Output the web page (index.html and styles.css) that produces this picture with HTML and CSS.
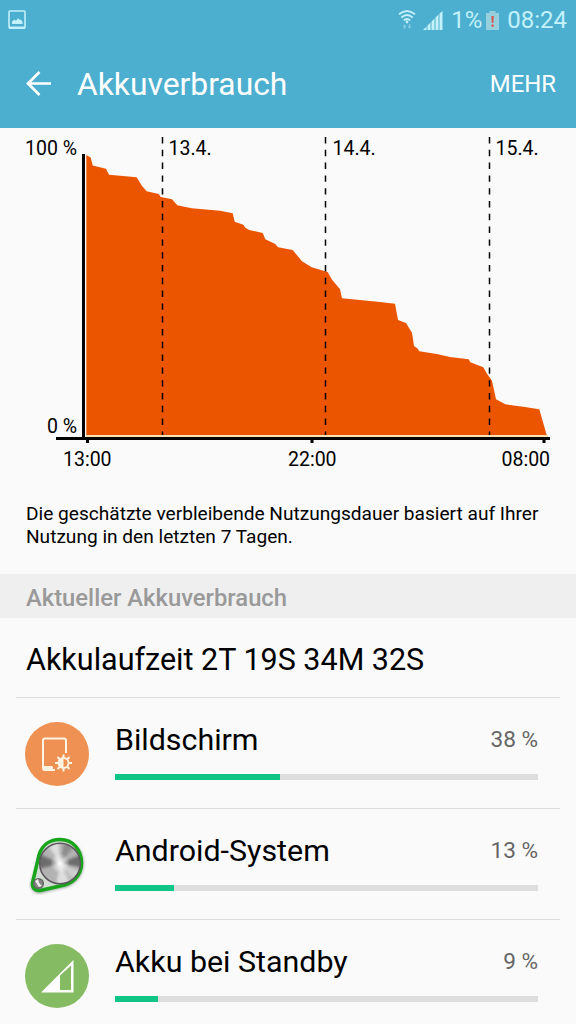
FILE: index.html
```html
<!DOCTYPE html>
<html lang="de">
<head>
  <meta charset="UTF-8" />
  <meta name="viewport" content="width=device-width, initial-scale=1.0" />
  <title>Akkuverbrauch</title>
  <link rel="stylesheet" href="styles.css">
</head>
<body>
  <!-- Statusleiste -->
  <div class="statusbar">
    <svg class="icon-picture" width="18" height="20" viewBox="0 0 18 20">
      <rect x="1" y="1" width="16" height="17" rx="1" fill="none" stroke="#c3f1fc" stroke-width="1.6" />
      <path d="M1 16.500h16V19H1z" fill="#c3f1fc" />
      <path d="M4 14v-2.5l2.5-2 1.5 1.3 2.2-2.8 1.5 2 1-.6 1.8 2.4V14z" fill="#c3f1fc" />
    </svg>
    <div class="status-right">
      <svg class="icon-wifi" width="18" height="20" viewBox="0 0 18 20">
        <g fill="none" stroke="#c3f1fc" stroke-width="1.9">
          <path d="M1 4.300Q9-2.300 17 4.300" />
          <path d="M3.400 7.500Q9 2.700 14.600 7.500" />
          <path d="M5.800 10.400Q9 7.600 12.200 10.400" />
        </g>
        <circle cx="9" cy="12" r="1.4" fill="#c3f1fc" />
        <path d="M6.500 14.200l2 2.300H7.300v2.300H5.700v-2.300H4.500z" fill="#85cbe1" />
        <path d="M11.500 18.800l-2-2.300h1.200v-2.300h1.600v2.300h1.200z" fill="#85cbe1" />
      </svg>
      <svg class="icon-signal" width="20" height="19" viewBox="0 0 20 19">
        <path d="M0 19l3.500-3.500V19zM4.500 14.500l3-3V19h-3zM8.500 10.500l3-3V19h-3zM12.500 6.500l3-3V19h-3zM16.500 2.500L19.500 0v19h-3z" fill="#c3f1fc" />
      </svg>
      <span class="percent">1%</span>
      <svg class="icon-battery" width="13" height="19" viewBox="0 0 13 19">
        <path d="M3.500 0h6v2H13v17H0V2h3.500z" fill="#96d0df" />
        <path d="M5.400 5h2.400l-.4 7H5.800zM5.500 13.500h2.200v2.300H5.500z" fill="#d9534a" />
      </svg>
      <span class="clock">08:24</span>
    </div>
  </div>

  <!-- Titelleiste -->
  <div class="appbar">
    <svg class="back" width="28" height="28" viewBox="0 0 28 28">
      <path d="M26 13.500H3M14.500 2L3 13.500l11.500 11.500" fill="none" stroke="#fff" stroke-width="2.700" />
    </svg>
    <h1>Akkuverbrauch</h1>
    <span class="more">MEHR</span>
  </div>

  <!-- Verlauf -->
  <svg class="chart" width="576" height="352" viewBox="0 128 576 352">
    <path class="base" d="M86 435h462v2H86z" />
    <path class="area" d="M86.300 435V155l4.400 2.500 2 8 13.300 3.200 3 6 27.700 2.600L142 186l4.700 5.300 12 2.700 2 3 11.300 2.300 5.300 6 14.400 3L220 210.700l12.700 2.600 2 8.400 8.600 3 2 3 4 2.300 13.400 3 2.600 6.300 10 4.700 2.700 3.300 14.700 2.700 9.300 11.300 9.700 6L327.700 272l4 7.300 8.300 10 2 9 38 3.700 15 1.700 3 16.300 8 3 6 9.700 2 13.300 3.300 2.300 2 3L436.700 354l13.300 3 18.700 2.300 1.600 3 13 5 3.400 6 5.300 7.400 4 18.600 9.300 5 18 2.400 16 2.600L546.700 435z" />
    <g class="days">
      <path d="M162.500 137v298" />
      <path d="M325.500 137v298" />
      <path d="M489.500 137v298" />
    </g>
    <path class="axis" d="M82 154h3v283h465v3H56v-3h26zM86 440h3v3h-3zM310.500 440h3v3h-3zM542.500 440h3v3h-3z" />
    <g class="labels">
      <text x="25" y="154.500">100 %</text>
      <text x="47" y="432.500">0 %</text>
      <text x="168.500" y="154.500">13.4.</text>
      <text x="332.500" y="154.500">14.4.</text>
      <text x="495.500" y="154.500">15.4.</text>
      <text x="63" y="466">13:00</text>
      <text x="288" y="466">22:00</text>
      <text x="501.500" y="466">08:00</text>
    </g>
  </svg>

  <p class="note">Die geschätzte verbleibende Nutzungsdauer basiert auf Ihrer<br>Nutzung in den letzten 7 Tagen.</p>

  <h2 class="section">Aktueller Akkuverbrauch</h2>
  <div class="runtime">Akkulaufzeit 2T 19S 34M 32S</div>

  <!-- Verbraucher -->
  <div class="row">
    <svg class="row-icon" width="64" height="64" viewBox="0 0 64 64">
      <circle cx="32" cy="32" r="32" fill="#ee9152" />
      <path d="M41 31V18.500q0-2-2-2H20q-2 0-2 2V46q0 2 2 2h10" fill="none" stroke="#fff4e4" stroke-width="2" />
      <path d="M18 44h9.500l1 5H20q-2 0-2-2z" fill="#fff4e4" />
      <g transform="translate(38.500 41)">
        <path d="M0-8.500V8.500M-8.500 0H8.500M-6-6L6 6M-6 6L6-6" stroke="#fff4e4" stroke-width="2" />
        <circle r="5" fill="#ee9152" stroke="#fff4e4" stroke-width="1.800" />
        <path d="M0-4.500A4.500 4.500 0 0 0 0 4.500z" fill="#fff4e4" />
      </g>
    </svg>
    <div class="row-body">
      <div class="row-text"><span class="name">Bildschirm</span><span class="value">38 %</span></div>
      <div class="bar"><div class="fill" style="width: 39.1%"></div></div>
    </div>
  </div>

  <div class="row">
    <svg class="row-icon" width="64" height="64" viewBox="0 0 64 64">
      <defs>
        <radialGradient id="shine">
          <stop offset="0" stop-color="#fff" />
          <stop offset="1" stop-color="#fff" stop-opacity="0" />
        </radialGradient>
        <clipPath id="knob"><circle cx="35" cy="30.500" r="20" /></clipPath>
        <filter id="soft" x="-20%" y="-20%" width="140%" height="140%"><feGaussianBlur stdDeviation="1.500" /></filter>
      </defs>
      <path d="M14 23C17 12 26 7 35 7C49 7 58.500 17 58.500 30C58.500 44 48 54 36 55L16 60C10 61 5 57 6 50Z" fill="#8b968b" filter="url(#soft)" />
      <path d="M14 22C17 12 25 6.500 35 6.500C48 6.500 56.500 17 56.500 30C56.500 43 47 51.500 35 53L15 57.500C10 58 7 55 7.500 50Z" fill="#d3dcd3" stroke="#18a51b" stroke-width="3.500" stroke-linejoin="round" />
      <g clip-path="url(#knob)">
        <path d="M14 9h42v43H14z" fill="#b2b2b2" />
        <g filter="url(#soft)">
          <path d="M35 30.500L10 19v18zM35 30.500L60 20v15z" fill="#6c6c6c" />
          <path d="M35 30.500L18 5l16-2zM35 30.500L50 58H30z" fill="#dedede" />
          <path d="M35 30.500L60 40l-8 12z" fill="#cfcfcf" />
          <path d="M35 30.500L40 5l11 6z" fill="#8d8d8d" />
        </g>
        <circle cx="35" cy="30.500" r="10" fill="url(#shine)" />
      </g>
      <circle cx="35" cy="30.500" r="20.300" fill="none" stroke="#5d555d" stroke-width="1.500" />
      <circle cx="13.500" cy="50.500" r="4.800" fill="#858585" stroke="#666" stroke-width="1.500" />
      <path d="M10 48l3-2 1 4 3 3-3 1z" fill="#eee" />
    </svg>
    <div class="row-body">
      <div class="row-text"><span class="name">Android-System</span><span class="value">13 %</span></div>
      <div class="bar"><div class="fill" style="width: 14%"></div></div>
    </div>
  </div>

  <div class="row">
    <svg class="row-icon" width="64" height="64" viewBox="0 0 64 64">
      <circle cx="32" cy="32" r="32" fill="#85bb62" />
      <path d="M16 48.500L48.500 16v32.500zM35 31.500V46h11V21.500z" fill="#fff" fill-rule="evenodd" />
    </svg>
    <div class="row-body">
      <div class="row-text"><span class="name">Akku bei Standby</span><span class="value">9 %</span></div>
      <div class="bar"><div class="fill" style="width: 10.1%"></div></div>
    </div>
  </div>
</body>
</html>
```
FILE: styles.css
```css
:root {
  --bar-blue: #4cafcf;
  --status-text: #c3f1fc;
  --page: #fafafa;
  --green: #10c486;
}
* { box-sizing: border-box; }
body {
  font-family: Roboto, "Liberation Sans", sans-serif;
  background: var(--page); color: #000;
  margin: 0; height: 1024px; overflow: hidden;
}
svg { display: block; flex: none; }

.statusbar {
  background: var(--bar-blue); color: var(--status-text);
  height: 40px; padding: 0 9px 0 8px;
  display: flex; align-items: center; justify-content: space-between;
  font-size: 24px;
}
.status-right { display: flex; align-items: center; }
.icon-signal { margin-left: 7px; }
.percent { margin-left: 8px; }
.icon-battery { margin-left: 4px; }
.clock { margin-left: 8px; }

.appbar {
  background: var(--bar-blue); color: #fff;
  height: 88px; padding: 0 20px 0 25px;
  display: flex; align-items: center;
}
.appbar h1 {
  font-size: 31.8px; font-weight: 400;
  margin: 0 0 0 24px; flex: 1;
}
.more { font-size: 23.9px; }

.chart .area { fill: #eb5500; }
.chart .base { fill: #fde0b4; }
.chart .axis { fill: #000; }
.chart .days {
  fill: none; stroke: #000; stroke-width: 1.5;
  stroke-dasharray: 6.4 6.4;
}
.labels { font-size: 19.5px; }

.note {
  margin: 22px 26px 0; height: 72px;
  font-size: 19.1px; line-height: 23px;
  white-space: nowrap;
}
.section {
  margin: 0; padding: 0 26px;
  height: 44px; line-height: 48px;
  background: #efefef; color: #999;
  font-size: 23.8px; font-weight: 500;
}
.runtime {
  margin: 0 16px; padding: 0 10px;
  height: 79px; line-height: 84px;
  font-size: 30.5px;
}
.row {
  margin: 0 16px; padding: 24px 22px 0 9px;
  height: 111px; display: flex; gap: 26px;
  border-top: 1px solid #dedede;
}
.row-body { flex: 1; }
.row-text {
  display: flex; justify-content: space-between;
  align-items: center; height: 35px;
}
.name { font-size: 30.4px; }
.value { font-size: 22.6px; color: #666; }
.bar {
  height: 6px; margin-top: 17px;
  background: #dedede;
}
.fill { height: 100%; background: var(--green); }
```
